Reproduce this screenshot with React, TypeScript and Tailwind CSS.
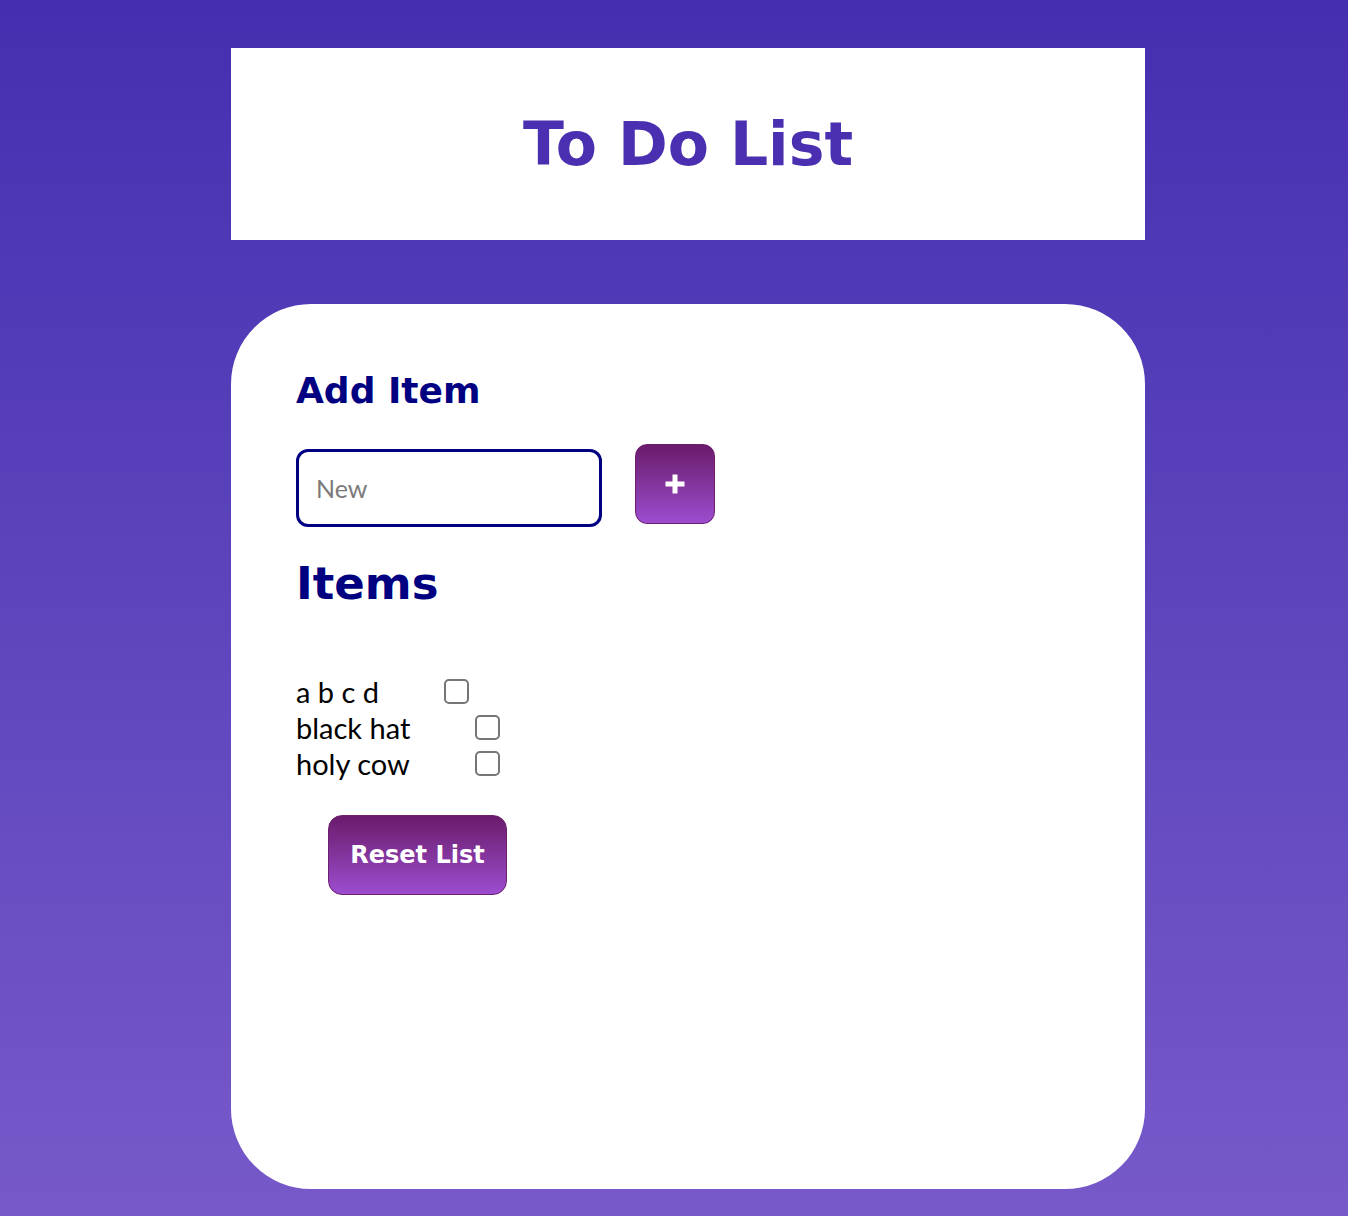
import React from "react";

const items = ["a b c d", "black hat", "holy cow"];

const heading = { fontFamily: "'DejaVu Sans', Verdana, sans-serif" };

export default function App() {
  return (
    <div
      className="min-h-screen w-full bg-gradient-to-b from-[#462eb0] to-[#7759c9] flex flex-col items-start pl-[231px] pt-[48px] pb-[27px]"
      style={{ fontFamily: "Lato, 'Open Sans', sans-serif" }}
    >
      <div className="w-[914px] h-[192px] bg-white flex items-center justify-center">
        <h1 className="text-[60px] font-bold text-[#4a30b0] leading-none" style={heading}>
          To Do List
        </h1>
      </div>

      <div className="mt-[64px] w-[914px] h-[885px] bg-white rounded-[80px] pl-[65px] pt-[69px]">
        <h2 className="text-[36px] font-bold text-[#000080] leading-none" style={heading}>
          Add Item
        </h2>
        <div className="flex items-start mt-[35px]">
          <input
            placeholder="New"
            className="mt-[5px] w-[306px] h-[78px] border-[3px] border-[#000080] rounded-[12px] px-[17px] text-[25px] text-black placeholder:text-[#7a7a7a] outline-none"
            style={{ fontFamily: "Lato, sans-serif" }}
          />
          <button className="ml-[33px] w-[80px] h-[80px] rounded-[12px] border-[1.5px] border-[#6d1f70] bg-gradient-to-b from-[#6a1b6c] to-[#9c4dd0] flex items-center justify-center">
            <svg width="22" height="22" viewBox="0 0 22 22">
              <path d="M11 1.5V20.5M1.5 11H20.5" stroke="white" strokeWidth="5" />
            </svg>
          </button>
        </div>
        <h2 className="mt-[34px] text-[45px] font-bold text-[#000080] leading-none" style={heading}>
          Items
        </h2>
        <ul className="mt-[68px] flex flex-col">
          {items.map((label) => (
            <li key={label} className="flex items-start h-[36px]">
              <span className="text-[29px] text-black leading-[36px]">{label}</span>
              <span className="ml-[65px] mt-[5px] w-[25px] h-[25px] border-2 border-[#767676] rounded-[5px] bg-white" />
            </li>
          ))}
        </ul>
        <button
          className="mt-[33px] ml-[32px] w-[179px] h-[80px] rounded-[14px] border-[1.5px] border-[#6d1f70] bg-gradient-to-b from-[#6a1b6c] to-[#9c4dd0] text-white text-[24px] font-bold leading-none"
          style={heading}
        >
          Reset List
        </button>
      </div>
    </div>
  );
}
